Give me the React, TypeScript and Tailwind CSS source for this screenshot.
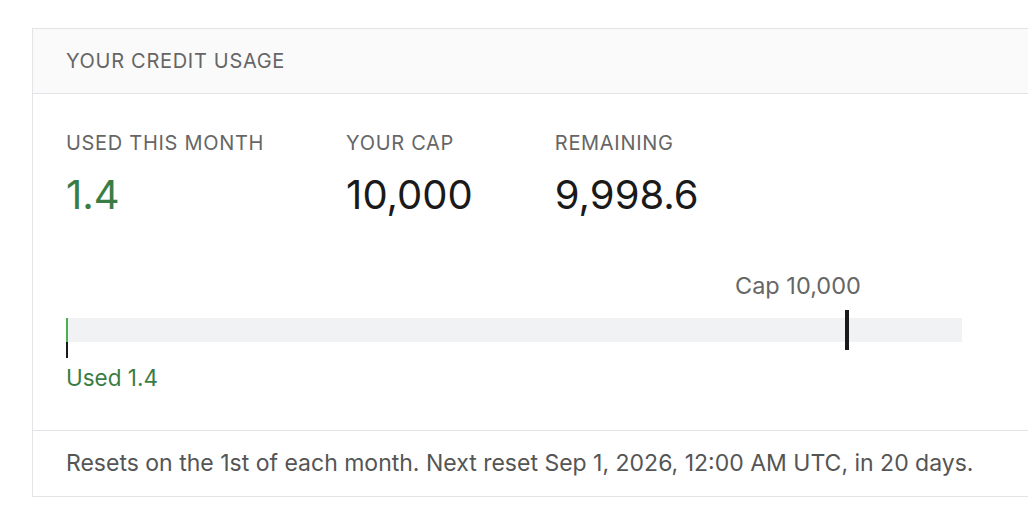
import React from 'react';

const usage = { used: 1.4, cap: 10000, scaleMax: 11500 };

const Stat: React.FC<{ label: string; value: string; green?: boolean }> = ({ label, value, green }) => (
  <div className="flex flex-col">
    <div className="text-[20px] leading-[24px] tracking-[0.035em] text-[#666666]">{label}</div>
    <div className={`mt-[17px] text-[40px] leading-[46px] ${green ? 'text-[#3a7d44]' : 'text-[#1a1a1a]'}`}>
      {value}
    </div>
  </div>
);

const App: React.FC = () => {
  const capPct = (usage.cap / usage.scaleMax) * 100;
  const usedPct = (usage.used / usage.scaleMax) * 100;

  return (
    <div className="min-h-screen w-full overflow-hidden bg-white pl-[32px] pt-[28px] font-['Inter',sans-serif]">
      <div className="w-[1100px] border border-[#e4e4e8] bg-white">
        {/* header */}
        <div className="flex h-[65px] items-center border-b border-[#e4e4e8] bg-[#fafafa] px-[33px]">
          <span className="text-[20px] tracking-[0.035em] text-[#666666]">YOUR CREDIT USAGE</span>
        </div>

        {/* body */}
        <div className="px-[33px] pb-[38px] pt-[37px]">
          <div className="flex gap-[82px]">
            <Stat label="USED THIS MONTH" value="1.4" green />
            <Stat label="YOUR CAP" value="10,000" />
            <Stat label="REMAINING" value="9,998.6" />
          </div>

          <div className="relative mt-[54px] w-[896px]">
            <div className="h-[28px]">
              <span className="absolute left-[669px] top-0 text-[23.5px] leading-[28px] text-[#666666]">
                Cap 10,000
              </span>
            </div>
            <div className="relative mt-[18px] h-[24px] bg-[#f1f2f4]">
              <div className="absolute left-0 top-0 h-full bg-[#4caf50]" style={{ width: `max(1.5px, ${usedPct}%)` }} />
              <div
                className="absolute top-[-8px] h-[40px] w-[4px] bg-[#1a1a1a]"
                style={{ left: `${capPct}%` }}
              />
              <div className="absolute left-0 top-[24px] h-[16px] w-[2px] bg-[#1a1a1a]" />
            </div>
            <div className="mt-[22px] text-[22.5px] leading-[28px] text-[#3a7d44]">Used 1.4</div>
          </div>
        </div>

        {/* footer */}
        <div className="flex h-[66px] items-center border-t border-[#e4e4e8] px-[33px]">
          <span className="text-[23px] text-[#555555]">
            Resets on the 1st of each month. Next reset Sep 1, 2026, 12:00 AM UTC, in 20 days.
          </span>
        </div>
      </div>
    </div>
  );
};

export default App;
